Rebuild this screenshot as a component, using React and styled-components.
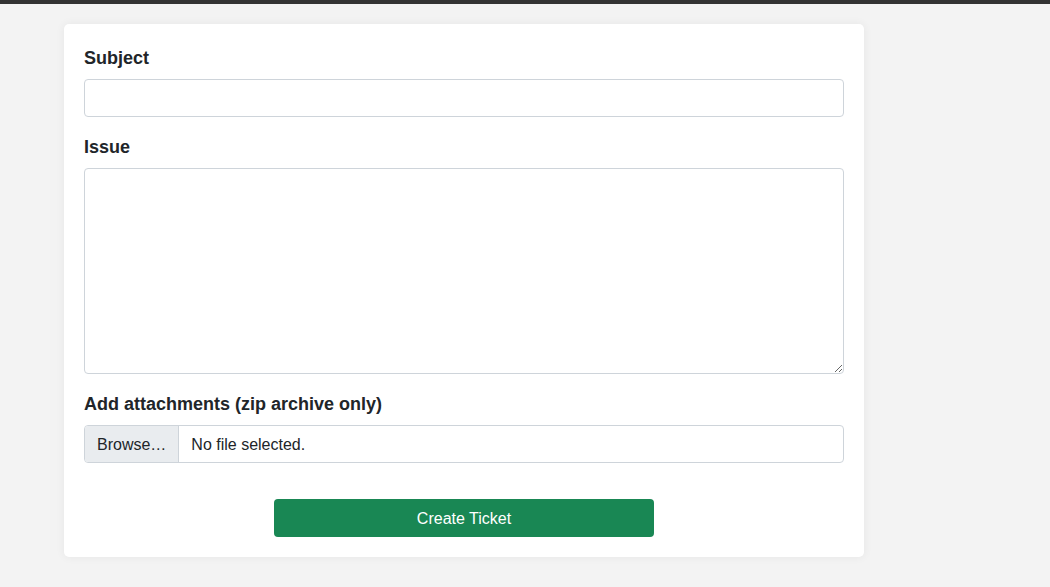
import React from 'react'
import styled, { createGlobalStyle } from 'styled-components'

const GlobalStyle = createGlobalStyle`
    body {
        margin: 0;
        background: #f3f3f3;
        font-family: "Liberation Sans", Arial, sans-serif;
        color: #212529;
    }
    * { box-sizing: border-box; }
`

const TopBar = styled.div`
    height: 4px;
    background: #333333;
`

const Page = styled.div`
    padding: 20px 0 30px 64px;
`

const Card = styled.form`
    width: 800px;
    background: #ffffff;
    border-radius: 5px;
    box-shadow: 0 0 10px rgba(0, 0, 0, 0.06);
    padding: 20px;
    display: flex;
    flex-direction: column;
`

const Group = styled.div`
    margin-bottom: ${p => p.last ? '36px' : '16px'};
`

const Label = styled.label`
    display: block;
    font-size: 18px;
    font-weight: bold;
    line-height: 25px;
    padding-top: 2px;
    margin-bottom: 8px;
    color: #212529;
`

const TextInput = styled.input`
    display: block;
    width: 100%;
    height: 38px;
    border: 1px solid #ced4da;
    border-radius: 4px;
    padding: 6px 12px;
    font: inherit;
    font-size: 16px;
    outline: none;
`

const TextArea = styled.textarea`
    display: block;
    width: 100%;
    height: 206px;
    border: 1px solid #ced4da;
    border-radius: 4px;
    padding: 6px 12px;
    font: inherit;
    font-size: 16px;
    outline: none;
    resize: vertical;
`

const FileBox = styled.label`
    display: flex;
    align-items: stretch;
    height: 38px;
    border: 1px solid #ced4da;
    border-radius: 4px;
    overflow: hidden;
    font-size: 16px;
    cursor: pointer;
    input { display: none; }
`

const FileButton = styled.span`
    display: flex;
    align-items: center;
    padding: 2px 12px 0;
    background: #e9ecef;
    border-right: 1px solid #ced4da;
    color: #212529;
`

const FileName = styled.span`
    display: flex;
    align-items: center;
    padding: 2px 12px 0;
    color: #212529;
`

const SubmitButton = styled.button`
    align-self: center;
    width: 380px;
    height: 38px;
    padding: 2px 0 0;
    border: none;
    border-radius: 4px;
    background: #198754;
    color: #ffffff;
    font: inherit;
    font-size: 16px;
    cursor: pointer;
`

export default function App() {
    return (
        <>
            <GlobalStyle />
            <TopBar />
            <Page>
                <Card onSubmit={e => e.preventDefault()}>
                    <Group>
                        <Label htmlFor="subject">Subject</Label>
                        <TextInput id="subject" type="text" />
                    </Group>
                    <Group>
                        <Label htmlFor="issue">Issue</Label>
                        <TextArea id="issue" />
                    </Group>
                    <Group last>
                        <Label>Add attachments (zip archive only)</Label>
                        <FileBox>
                            <input type="file" accept=".zip" />
                            <FileButton>Browse…</FileButton>
                            <FileName>No file selected.</FileName>
                        </FileBox>
                    </Group>
                    <SubmitButton type="submit">Create Ticket</SubmitButton>
                </Card>
            </Page>
        </>
    )
}
